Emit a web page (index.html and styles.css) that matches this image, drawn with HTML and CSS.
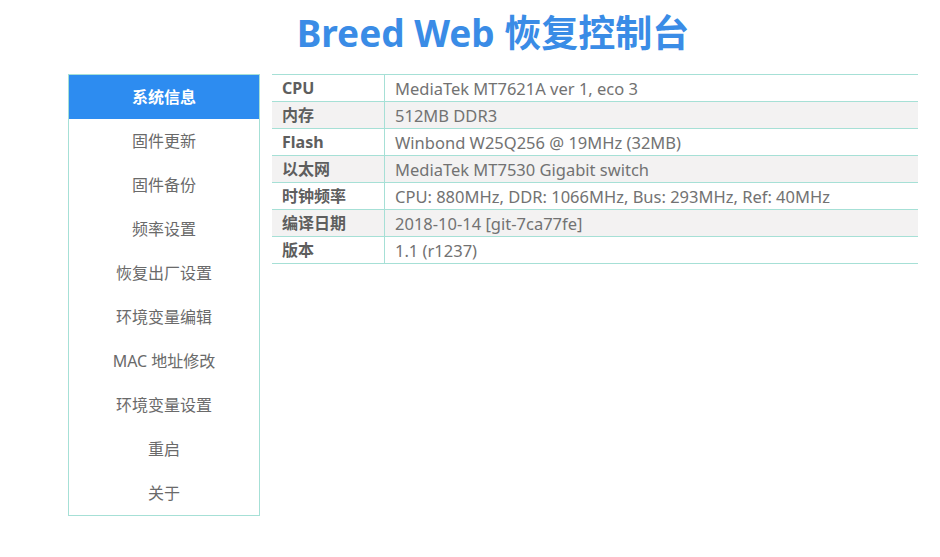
FILE: index.html
```html
<!DOCTYPE html>
<html lang="zh-CN">
<head>
<meta charset="utf-8">
<title>Breed Web 恢复控制台</title>
<link rel="stylesheet" href="styles.css">
</head>
<body>
<div class="page">
  <h1 class="title">Breed Web 恢复控制台</h1>
  <div class="main">
    <nav class="menu">
      <a class="item active">系统信息</a>
      <a class="item">固件更新</a>
      <a class="item">固件备份</a>
      <a class="item">频率设置</a>
      <a class="item">恢复出厂设置</a>
      <a class="item">环境变量编辑</a>
      <a class="item">MAC 地址修改</a>
      <a class="item">环境变量设置</a>
      <a class="item">重启</a>
      <a class="item">关于</a>
    </nav>
    <div class="content">
      <table class="info">
        <tr><th>CPU</th><td>MediaTek MT7621A ver 1, eco 3</td></tr>
        <tr><th>内存</th><td>512MB DDR3</td></tr>
        <tr><th>Flash</th><td>Winbond W25Q256 @ 19MHz (32MB)</td></tr>
        <tr><th>以太网</th><td>MediaTek MT7530 Gigabit switch</td></tr>
        <tr><th>时钟频率</th><td>CPU: 880MHz, DDR: 1066MHz, Bus: 293MHz, Ref: 40MHz</td></tr>
        <tr><th>编译日期</th><td>2018-10-14 [git-7ca77fe]</td></tr>
        <tr><th>版本</th><td>1.1 (r1237)</td></tr>
      </table>
    </div>
  </div>
</div>
</body>
</html>
```
FILE: styles.css
```css
html, body {
  margin: 0;
  padding: 0;
  background: #fff;
}
body {
  font-family: "Noto Sans", "Noto Sans CJK SC", sans-serif;
  color: #666;
}
.page {
  width: 850px;
  margin-left: 68px;
}
.title {
  margin: 0;
  height: 74px;
  line-height: 66px;
  text-align: center;
  font-size: 37px;
  font-weight: 700;
  color: #3a8ce6;
  font-family: "Noto Sans", "Noto Sans CJK SC", sans-serif;
}
.main {
  display: flex;
  align-items: flex-start;
  gap: 12px;
}
.menu {
  width: 190px;
  border: 1px solid #a6e0d6;
  display: flex;
  flex-direction: column;
}
.item {
  height: 44px;
  line-height: 44px;
  text-align: center;
  font-size: 16px;
  color: #6a6a6a;
}
.item.active {
  background: #2d8cf0;
  color: #fff;
  font-weight: 700;
}
.content {
  flex: 1;
}
.info {
  width: 100%;
  border-collapse: collapse;
}
.info tr {
  height: 27px;
}
.info th, .info td {
  border-top: 1px solid #a6e0d6;
  border-bottom: 1px solid #a6e0d6;
  padding: 0 10px;
  line-height: 25px;
  text-align: left;
  white-space: nowrap;
}
.info th {
  width: 92px;
  font-size: 16px;
  font-weight: 700;
  color: #5e5e5e;
  border-right: 1px solid #a6e0d6;
}
.info td {
  font-size: 16.5px;
  color: #727272;
}
.info tr:nth-child(even) {
  background: #f3f2f2;
}
```
